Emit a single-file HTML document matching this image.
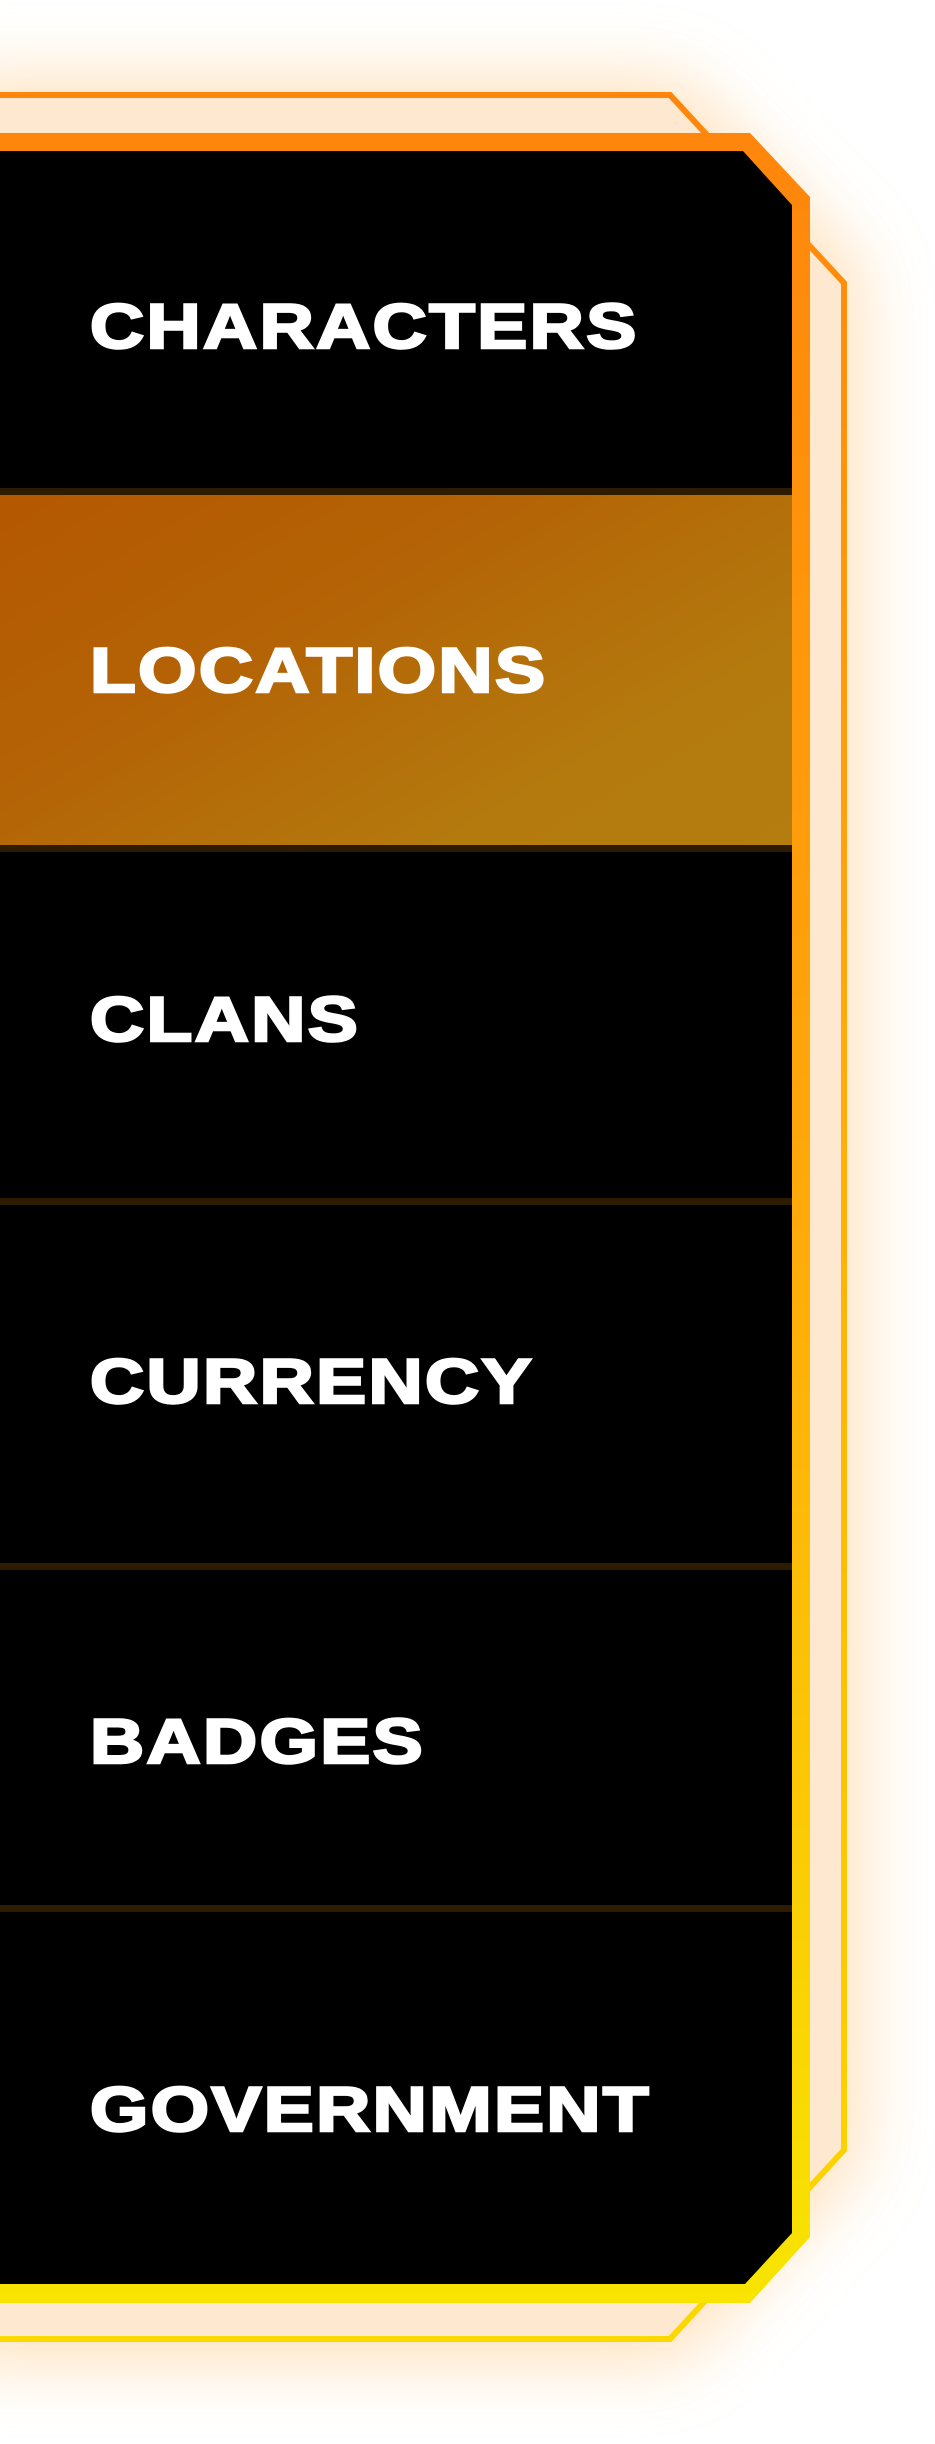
<!DOCTYPE html>
<html><head><meta charset="utf-8"><style>
html,body{margin:0;padding:0;background:#fff;width:935px;height:2444px;overflow:hidden;position:relative}
svg{position:absolute;left:0;top:0}
.row{position:absolute;left:0;width:792px}
.sep{position:absolute;left:0;width:792px;height:7px;background:#2e1c00}
.t{position:absolute;left:90px;font-family:"Liberation Sans",sans-serif;font-weight:bold;color:#fff;font-size:63px;letter-spacing:2px;line-height:1;transform:scaleX(1.19);transform-origin:left center;white-space:nowrap;-webkit-text-stroke:2.5px #fff}
</style></head><body>
<svg width="935" height="2444" viewBox="0 0 935 2444">
<defs>
<linearGradient id="lg" gradientUnits="userSpaceOnUse" x1="0" y1="90" x2="0" y2="2345"><stop offset="0" stop-color="#ff860c"/><stop offset="0.5" stop-color="#ffb00a"/><stop offset="1" stop-color="#fbd800"/></linearGradient>
<linearGradient id="bg2" gradientUnits="userSpaceOnUse" x1="0" y1="133" x2="0" y2="2303"><stop offset="0" stop-color="#ff860c"/><stop offset="0.5" stop-color="#ffaa0a"/><stop offset="1" stop-color="#f8e400"/></linearGradient>
<filter id="bl" x="-50%" y="-50%" width="200%" height="200%"><feGaussianBlur stdDeviation="35"/></filter>
</defs>
<polygon points="-50,80 680,80 860,270 860,2160 680,2360 -50,2360" fill="#ffd9a8" opacity="0.8" filter="url(#bl)"/>
<polygon points="-10,95 670,95 844,283 844,2150 670,2339 -10,2339" fill="#fee9d0" stroke="url(#lg)" stroke-width="6"/>
<polygon points="-10,133 750,133 810,197 810,2237 750,2303 -10,2303" fill="url(#bg2)"/>
<polygon points="-10,151 743,151 792,205 792,2233 745,2284 -10,2284" fill="#000"/>
</svg>
<div class="row" style="top:495px;height:350px;background:linear-gradient(150deg,#b45802 0%,#b46205 35%,#b47a0e 75%,#b47d0f 100%)"></div>
<div class="sep" style="top:488px"></div>
<div class="sep" style="top:845px"></div>
<div class="sep" style="top:1198px"></div>
<div class="sep" style="top:1563px"></div>
<div class="sep" style="top:1905px"></div>
<div class="t" style="top:296px">CHARACTERS</div>
<div class="t" style="top:640px">LOCATIONS</div>
<div class="t" style="top:989px">CLANS</div>
<div class="t" style="top:1351px">CURRENCY</div>
<div class="t" style="top:1711px">BADGES</div>
<div class="t" style="top:2079px">GOVERNMENT</div>
</body></html>
